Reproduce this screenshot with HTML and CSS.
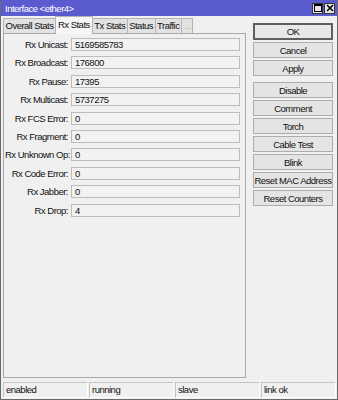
FILE: index.html
```html
<!DOCTYPE html>
<html>
<head>
	<meta charset="utf-8">
	<title>Interface &lt;ether4&gt;</title>
	<link rel="stylesheet" href="styles.css">
</head>
<body>

	<div class="ventana">
		<div class="barraTitulo">
			<span class="titulo">Interface &lt;ether4&gt;</span>
			<div class="botonesTitulo">
				<span class="btnTitulo">
					<svg width="8" height="8" viewBox="0 0 8 8"><rect x="0.5" y="0.5" width="7" height="7" fill="none" stroke="#000"/><line x1="0" y1="1.5" x2="8" y2="1.5" stroke="#000"/></svg>
				</span>
				<span class="btnTitulo">
					<svg width="8" height="8" viewBox="0 0 8 8"><path d="M1 1 L7 7 M7 1 L1 7" stroke="#000" stroke-width="1.6"/></svg>
				</span>
			</div>
		</div>

		<div class="cuerpo">
			<div class="principal">
				<div class="pestanas">
					<span class="pestana">Overall Stats</span>
					<span class="pestana activa">Rx Stats</span>
					<span class="pestana">Tx Stats</span>
					<span class="pestana">Status</span>
					<span class="pestana">Traffic</span>
					<span class="pestana deshabilitada">...</span>
				</div>

				<div class="panel">
					<label>Rx Unicast:</label><div class="campo">5169585783</div>
					<label>Rx Broadcast:</label><div class="campo">176800</div>
					<label>Rx Pause:</label><div class="campo">17395</div>
					<label>Rx Multicast:</label><div class="campo">5737275</div>
					<label>Rx FCS Error:</label><div class="campo">0</div>
					<label>Rx Fragment:</label><div class="campo">0</div>
					<label>Rx Unknown Op:</label><div class="campo">0</div>
					<label>Rx Code Error:</label><div class="campo">0</div>
					<label>Rx Jabber:</label><div class="campo">0</div>
					<label>Rx Drop:</label><div class="campo">4</div>
				</div>
			</div>

			<div class="acciones">
				<div class="grupo">
					<button class="defecto">OK</button>
					<button>Cancel</button>
					<button>Apply</button>
				</div>
				<div class="grupo">
					<button>Disable</button>
					<button>Comment</button>
					<button>Torch</button>
					<button>Cable Test</button>
					<button>Blink</button>
					<button>Reset MAC Address</button>
					<button>Reset Counters</button>
				</div>
			</div>
		</div>

		<div class="barraEstado">
			<span>enabled</span>
			<span>running</span>
			<span>slave</span>
			<span>link ok</span>
		</div>
	</div>

</body>
</html>
```

FILE: styles.css
```css
*{box-sizing: border-box;}
body{
	margin: 0;
	font-family: "Liberation Sans", Arial, sans-serif;
	font-size: 9.5px;
	letter-spacing: -0.5px;
	color: #111;
}
div.ventana{
	width: 338px;
	height: 400px;
	display: flex;
	flex-direction: column;
	background: #f0f0f0;
	border: 1px solid #6a6a6a;
	border-top: none;
}

/* barra de titulo */
div.barraTitulo{
	height: 17px;
	background: #5b5bd0;
	display: flex;
	align-items: center;
	justify-content: space-between;
	padding: 0 2px 0 4px;
	color: #fff;
}
div.botonesTitulo{display: flex; gap: 1px;}
span.btnTitulo{
	width: 11px;
	height: 11px;
	background: #e6e6e6;
	border: 1px solid #333;
	display: flex;
	align-items: center;
	justify-content: center;
}

/* cuerpo */
div.cuerpo{
	flex: 1;
	display: flex;
	padding: 0 4px 0 2px;
}
div.principal{
	width: 243px;
	display: flex;
	flex-direction: column;
}
div.pestanas{
	display: flex;
	align-items: flex-end;
	height: 17px;
}
span.pestana{
	height: 15px;
	line-height: 14px;
	padding: 0 1.5px;
	background: #e2e2e2;
	border: 1px solid #b4b4b4;
	border-bottom: none;
	margin-right: -1px;
	white-space: nowrap;
}
span.pestana.activa{
	height: 18px;
	line-height: 15px;
	padding: 0 2px;
	background: #f6f6f6;
	position: relative;
	z-index: 1;
	margin-bottom: -1px;
}
span.pestana.deshabilitada{color: #b0b0b0; padding: 0 2px;}

div.panel{
	height: 345px;
	border: 1px solid #a8a8a8;
	background: #f0f0f0;
	display: grid;
	grid-template-columns: 63px 169px;
	grid-auto-rows: 13px;
	row-gap: 5.4px;
	column-gap: 3px;
	align-content: start;
	padding: 4px 0 0 1px;
}
div.panel label{
	text-align: right;
	line-height: 13px;
	white-space: nowrap;
}
div.campo{
	border: 1px solid #bcbcbc;
	background: #f2f2f2;
	line-height: 11px;
	padding-left: 3px;
}

/* botones */
div.acciones{
	margin-left: 7px;
	margin-top: 7px;
	width: 80px;
	display: flex;
	flex-direction: column;
	gap: 6px;
}
div.grupo{
	display: flex;
	flex-direction: column;
	gap: 2px;
}
div.grupo button{
	height: 16px;
	font: inherit;
	letter-spacing: inherit;
	color: #111;
	background: #e4e4e4;
	border: 1px solid #adadad;
	padding: 0;
}
div.grupo button.defecto{
	height: 17px;
	border: 2px solid #5f5f5f;
	background: #e8e8e8;
}

/* barra de estado */
div.barraEstado{
	height: 21px;
	display: grid;
	grid-template-columns: 85px 85px 85px 1fr;
	column-gap: 1px;
	padding: 4px 1px 1px 2px;
}
div.barraEstado span{
	border: 1px solid #c4c4c4;
	border-right-color: #fdfdfd;
	border-bottom-color: #fdfdfd;
	line-height: 14px;
	padding-left: 2px;
}
```
